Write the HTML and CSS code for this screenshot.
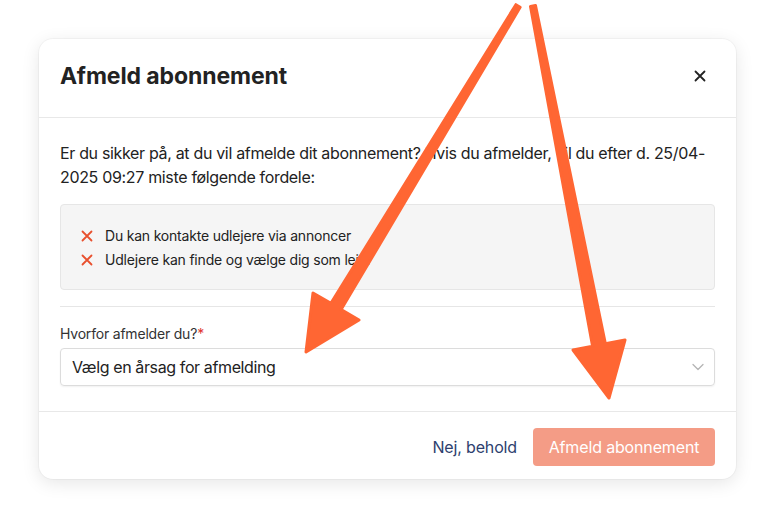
FILE: index.html
```html
<!DOCTYPE html>
<html lang="da">
<head>
<meta charset="utf-8">
<title>Afmeld abonnement</title>
<link rel="stylesheet" href="styles.css">
</head>
<body>
<div class="page">
  <div class="modal">
    <div class="modal-header">
      <h2 class="modal-title">Afmeld abonnement</h2>
      <button class="close-btn" aria-label="Luk">
        <svg width="12" height="12" viewBox="0 0 12 12"><path d="M1.5 1.5 L10.5 10.5 M10.5 1.5 L1.5 10.5" stroke="#222" stroke-width="1.8" stroke-linecap="round"/></svg>
      </button>
    </div>
    <div class="modal-body">
      <p class="intro">Er du sikker på, at du vil afmelde dit abonnement? Hvis du afmelder, vil du efter d. 25/04-2025 09:27 miste følgende fordele:</p>
      <div class="benefits">
        <ul class="benefit-list">
          <li class="benefit"><svg class="xicon" width="12" height="12" viewBox="0 0 12 12"><path d="M1.5 1.5 L10.5 10.5 M10.5 1.5 L1.5 10.5" stroke="#e8502e" stroke-width="1.8" stroke-linecap="round"/></svg><span>Du kan kontakte udlejere via annoncer</span></li>
          <li class="benefit"><svg class="xicon" width="12" height="12" viewBox="0 0 12 12"><path d="M1.5 1.5 L10.5 10.5 M10.5 1.5 L1.5 10.5" stroke="#e8502e" stroke-width="1.8" stroke-linecap="round"/></svg><span>Udlejere kan finde og vælge dig som lejer</span></li>
        </ul>
      </div>
      <hr class="divider">
      <label class="field-label">Hvorfor afmelder du?<span class="req">*</span></label>
      <div class="select">
        <span class="select-text">Vælg en årsag for afmelding</span>
        <svg class="chevron" width="12" height="8" viewBox="0 0 12 8"><path d="M1 1.5 L6 6.5 L11 1.5" fill="none" stroke="#b5b5b5" stroke-width="1.3" stroke-linecap="round" stroke-linejoin="round"/></svg>
      </div>
    </div>
    <div class="modal-footer">
      <button class="btn-link">Nej, behold</button>
      <button class="btn-primary" disabled>Afmeld abonnement</button>
    </div>
  </div>
</div>
<svg class="arrows" width="775" height="518" viewBox="0 0 775 518">
  <path d="M515.9 4.7 L330.9 303.4 L313 293 L306 352 L359 320 L341.1 309.6 L520.1 7.3 Z" fill="#ff6633" stroke="#ff6633" stroke-width="3" stroke-linejoin="round"/>
  <path d="M530.5 6.5 L592.6 346.2 L573 350 L609 398 L625 340 L605.4 343.8 L535.5 5.5 Z" fill="#ff6633" stroke="#ff6633" stroke-width="3" stroke-linejoin="round"/>
</svg>
</body>
</html>
```
FILE: styles.css
```css
* { box-sizing: border-box; }
html, body { margin: 0; padding: 0; background: #fff; }
body {
  font-family: Inter, "Noto Sans", sans-serif;
  color: #222;
  width: 775px;
  height: 518px;
  overflow: hidden;
  position: relative;
}
.page {
  padding: 39px 39px;
}
.modal {
  width: 697px;
  background: #fff;
  border-radius: 14px;
  box-shadow: 0 4px 18px rgba(0,0,0,0.10), 0 0 0 1px rgba(0,0,0,0.03);
}
.modal-header {
  height: 79px;
  display: flex;
  align-items: center;
  justify-content: space-between;
  padding: 0 26px 4px 21px;
  border-bottom: 1px solid #e8e8e8;
}
.modal-title {
  margin: 0;
  font-size: 23px;
  font-weight: 700;
  color: #222;
  letter-spacing: -0.1px;
}
.close-btn {
  border: 0;
  background: none;
  padding: 0;
  width: 20px;
  height: 20px;
  display: flex;
  align-items: center;
  justify-content: center;
}
.modal-body {
  padding: 23px 21px 25px 21px;
}
.intro {
  margin: 0;
  font-size: 16px;
  line-height: 24px;
  color: #222;
  letter-spacing: -0.33px;
}
.benefits {
  margin-top: 15px;
  background: #f5f5f5;
  border: 1px solid #e6e6e6;
  border-radius: 4px;
  padding: 19px 20px 17px;
}
.benefit-list {
  list-style: none;
  margin: 0;
  padding: 0;
}
.benefit {
  display: flex;
  align-items: center;
  gap: 12px;
  font-size: 14px;
  line-height: 24px;
  color: #222;
  letter-spacing: -0.2px;
}
.xicon { flex: none; }
.divider {
  margin: 16px 0 17px;
  border: 0;
  border-top: 1px solid #e6e6e6;
}
.field-label {
  display: block;
  font-size: 14px;
  line-height: 20px;
  color: #333;
  margin-bottom: 4px;
  letter-spacing: -0.2px;
}
.req { color: #e0352b; }
.select {
  height: 38px;
  border: 1px solid #dcdcdc;
  border-radius: 4px;
  box-shadow: 0 1px 2px rgba(0,0,0,0.06);
  display: flex;
  align-items: center;
  justify-content: space-between;
  padding: 0 10px 0 11px;
  font-size: 16px;
  color: #222;
  letter-spacing: -0.38px;
}
.modal-footer {
  border-top: 1px solid #e8e8e8;
  display: flex;
  justify-content: flex-end;
  align-items: center;
  gap: 16px;
  padding: 16px 21px 13px;
}
.btn-link {
  border: 0;
  background: none;
  font-family: inherit;
  font-size: 16px;
  color: #2e3f6e;
  padding: 0;
  letter-spacing: -0.15px;
}
.btn-primary {
  border: 0;
  font-family: inherit;
  font-size: 16px;
  color: #fff;
  background: #f49c86;
  border-radius: 4px;
  height: 38px;
  width: 182px;
  letter-spacing: -0.15px;
}
.arrows {
  position: absolute;
  left: 0;
  top: 0;
  pointer-events: none;
}
```
